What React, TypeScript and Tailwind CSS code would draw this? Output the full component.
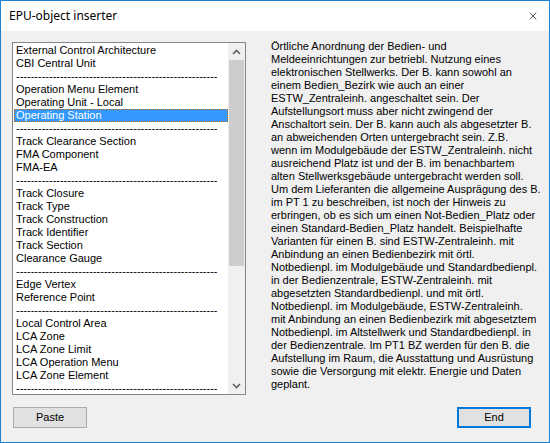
import { X } from 'lucide-react'

const dashes = '-'.repeat(55)

// list entries, null = separator line
const items: (string | null)[] = [
  'External Control Architecture',
  'CBI Central Unit',
  null,
  'Operation Menu Element',
  'Operating Unit - Local',
  'Operating Station',
  null,
  'Track Clearance Section',
  'FMA Component',
  'FMA-EA',
  null,
  'Track Closure',
  'Track Type',
  'Track Construction',
  'Track Identifier',
  'Track Section',
  'Clearance Gauge',
  null,
  'Edge Vertex',
  'Reference Point',
  null,
  'Local Control Area',
  'LCA Zone',
  'LCA Zone Limit',
  'LCA Operation Menu',
  'LCA Zone Element',
  null,
]

const description = [
  'Örtliche Anordnung der Bedien- und',
  'Meldeeinrichtungen zur betriebl. Nutzung eines',
  'elektronischen Stellwerks. Der B. kann sowohl an',
  'einem Bedien_Bezirk wie auch an einer',
  'ESTW_Zentraleinh. angeschaltet sein. Der',
  'Aufstellungsort muss aber nicht zwingend der',
  'Anschaltort sein. Der B. kann auch als abgesetzter B.',
  'an abweichenden Orten untergebracht sein. Z.B.',
  'wenn im Modulgebäude der ESTW_Zentraleinh. nicht',
  'ausreichend Platz ist und der B. im benachbartem',
  'alten Stellwerksgebäude untergebracht werden soll.',
  'Um dem Lieferanten die allgemeine Ausprägung des B.',
  'im PT 1 zu beschreiben, ist noch der Hinweis zu',
  'erbringen, ob es sich um einen Not-Bedien_Platz oder',
  'einen Standard-Bedien_Platz handelt. Beispielhafte',
  'Varianten für einen B. sind ESTW-Zentraleinh. mit',
  'Anbindung an einen Bedienbezirk mit örtl.',
  'Notbedienpl. im Modulgebäude und Standardbedienpl.',
  'in der Bedienzentrale, ESTW-Zentraleinh. mit',
  'abgesetzten Standardbedienpl. und mit örtl.',
  'Notbedienpl. im Modulgebäude, ESTW-Zentraleinh.',
  'mit Anbindung an einen Bedienbezirk mit abgesetztem',
  'Notbedienpl. im Altstellwerk und Standardbedienpl. in',
  'der Bedienzentrale. Im PT1 BZ werden für den B. die',
  'Aufstellung im Raum, die Ausstattung und Ausrüstung',
  'sowie die Versorgung mit elektr. Energie und Daten',
  'geplant.',
]

const Chevron = ({ up }: { up?: boolean }) => (
  <svg width="9" height="6" viewBox="0 0 9 6">
    <polyline
      points={up ? '1,5 4.5,1.5 8,5' : '1,1 4.5,4.5 8,1'}
      fill="none"
      stroke="#606060"
      strokeWidth="1.6"
    />
  </svg>
)

export default function App() {
  const selected = 5

  return (
    <div className="w-[550px] h-[443px] border border-[#1883d7] flex flex-col font-['Liberation_Sans',Arial,sans-serif] text-[11px] leading-[13px] text-black">
      {/* Title bar */}
      <div className="h-[30px] bg-white flex items-center justify-between pl-2 pr-[10px]">
        <span className="font-['Noto_Sans',sans-serif] text-[12px] leading-none">EPU-object inserter</span>
        <X className="w-[12px] h-[12px] text-black" strokeWidth={1.3} />
      </div>

      {/* Body */}
      <div className="flex-1 bg-[#f0f0f0] flex flex-col">
        <div className="flex items-start pt-[9px] pl-[11px]">
          {/* List box */}
          <div className="mt-[2px] w-[234px] h-[353px] border border-[#828790] bg-white flex overflow-hidden">
            <div className="flex-1 pt-[1px] pl-[1px] overflow-hidden">
              {items.map((item, i) => (
                <div
                  key={i}
                  className={
                    i === selected
                      ? 'h-[13px] pl-[2px] whitespace-nowrap bg-[#3399ff] text-white outline-1 outline-dotted outline-[#cc6600] -outline-offset-1'
                      : 'h-[13px] pl-[2px] whitespace-nowrap'
                  }
                >
                  {item ?? dashes}
                </div>
              ))}
            </div>
            {/* Scrollbar */}
            <div className="w-[17px] bg-[#f0f0f0] flex flex-col">
              <div className="h-[17px] flex items-center justify-center">
                <Chevron up />
              </div>
              <div className="flex-1 px-[1px]">
                <div className="h-[206px] bg-[#cdcdcd]" />
              </div>
              <div className="h-[17px] flex items-center justify-center">
                <Chevron />
              </div>
            </div>
          </div>

          {/* Description */}
          <div className="ml-[25px]">
            {description.map((line, i) => (
              <div key={i} className="h-[13px] whitespace-nowrap">
                {line}
              </div>
            ))}
          </div>
        </div>

        {/* Buttons */}
        <div className="mt-[12px] flex justify-between pl-[12px] pr-[18px]">
          <button className="w-[74px] h-[21px] bg-[#e1e1e1] border border-[#adadad] flex items-center justify-center">
            Paste
          </button>
          <button className="w-[74px] h-[21px] bg-[#e1e1e1] border-2 border-[#0078d7] flex items-center justify-center">
            End
          </button>
        </div>
      </div>
    </div>
  )
}
